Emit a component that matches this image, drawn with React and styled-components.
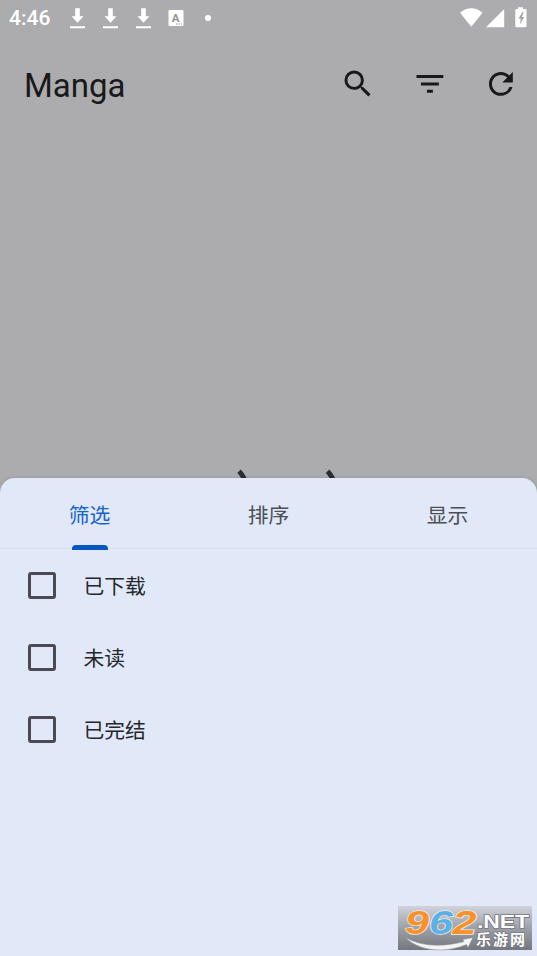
import styled, { createGlobalStyle } from "styled-components";

const GlobalStyle = createGlobalStyle`
  * {
    box-sizing: border-box;
  }
  body {
    margin: 0;
    font-family: Roboto, "Noto Sans CJK SC", sans-serif;
  }
  svg {
    display: block;
    flex: none;
  }
`;

const Screen = styled.div`
  position: relative;
  display: flex;
  flex-direction: column;
  width: 537px;
  height: 956px;
  overflow: hidden;
  background: #acacae;
`;

const StatusBar = styled.div`
  display: flex;
  align-items: center;
  justify-content: space-between;
  height: 36px;
  padding: 0 9px;
  color: #fff;
`;

const StatusGroup = styled.div`
  display: flex;
  align-items: center;
  gap: ${(props) => props.$gap};
`;

const Clock = styled.span`
  width: 44px;
  font-size: 21px;
  font-weight: 500;
  line-height: 36px;
  white-space: nowrap;
`;

const Dot = styled.span`
  width: 6px;
  height: 6px;
  margin-left: 5px;
  border-radius: 50%;
  background: #fff;
`;

const AppBar = styled.header`
  display: flex;
  align-items: center;
  justify-content: space-between;
  height: 95px;
  padding: 0 18px 0 24px;
  color: #19191b;
`;

const Title = styled.h1`
  margin: 5px 0 0;
  font-size: 33px;
  font-weight: 400;
  line-height: 44px;
`;

const Actions = styled.div`
  display: flex;
  gap: 35.8px;
`;

const Empty = styled.main`
  display: flex;
  flex: 1;
  align-items: flex-end;
  justify-content: center;
  padding-left: 36px;
`;

const Sheet = styled.section`
  height: 478px;
  border-radius: 15px 15px 0 0;
  background: #e1e9f8;
  box-shadow: 0 0 4px rgba(0, 0, 0, 0.12);
`;

const Tabs = styled.div`
  display: grid;
  grid-template-columns: repeat(3, 1fr);
  height: 71px;
  border-bottom: 1px solid #dcdfea;
`;

const Tab = styled.div`
  position: relative;
  padding-top: 22px;
  font-size: 20.8px;
  line-height: 32px;
  text-align: center;
  color: ${(props) => (props.$active ? "#1662cb" : "#4d4e56")};

  &::after {
    content: "";
    display: ${(props) => (props.$active ? "block" : "none")};
    position: absolute;
    left: 50%;
    bottom: -2px;
    width: 36px;
    height: 5px;
    margin-left: -18px;
    border-radius: 4px 4px 0 0;
    background: #0657c2;
  }
`;

const Row = styled.div`
  display: flex;
  align-items: center;
  gap: 28px;
  height: 71.67px;
  padding-left: 28px;
  font-size: 20.8px;
  line-height: 32px;
  color: #25262b;
`;

const Box = styled.span`
  width: 27.5px;
  height: 27px;
  border: 3px solid #4b4953;
  border-radius: 3px;
`;

const Label = styled.span`
  padding-top: 3px;
`;

const Options = styled.div`
  padding-top: 1px;
`;

const Badge = styled.div`
  position: absolute;
  right: 5px;
  bottom: 6px;
  width: 134px;
  height: 44px;
  background: linear-gradient(#d0d3dc, #a3a5ad 45%, #75777f);
`;

const BadgeSvg = styled.svg`
  overflow: visible;
  font-family: "Liberation Sans", "Noto Sans CJK SC", sans-serif;
  font-weight: 700;
`;

const Icon = ({ d }) => (
  <svg width="35.8" height="35.8" viewBox="0 0 24 24" fill="currentColor">
    <path d={d} />
  </svg>
);

const Download = () => (
  <svg width="17" height="22" viewBox="0 0 17 22" fill="#fff">
    <path d="M6.2 1.2h4.6v8h3.7l-6 6.5-6-6.5h3.7zM1 19.2h15v2H1z" />
  </svg>
);

const actions = [
  "M15.5 14h-.79l-.28-.27A6.47 6.47 0 0 0 16 9.5 6.5 6.5 0 1 0 9.5 16c1.61 0 3.09-.59 4.23-1.57l.27.28v.79l5 4.99L20.49 19l-4.99-5zm-6 0C7.01 14 5 11.99 5 9.5S7.01 5 9.5 5 14 7.01 14 9.5 11.99 14 9.5 14z",
  "M10 18h4v-2h-4v2zM3 6v2h18V6H3zm3 7h12v-2H6v2z",
  "M17.65 6.35A7.958 7.958 0 0 0 12 4c-4.42 0-7.99 3.58-7.99 8s3.57 8 7.99 8c3.73 0 6.84-2.55 7.73-6h-2.08A5.99 5.99 0 0 1 12 18c-3.31 0-6-2.69-6-6s2.69-6 6-6c1.66 0 3.14.69 4.22 1.78L13 11h7V4l-2.35 2.35z",
];

const tabs = ["筛选", "排序", "显示"];
const filters = ["已下载", "未读", "已完结"];

const digits = [
  { char: "9", x: 7, fill: "#f5922a" },
  { char: "6", x: 31, fill: "#5bb0e6" },
  { char: "2", x: 54.5, fill: "#f5922a" },
];

function Watermark() {
  return (
    <Badge>
      <BadgeSvg width="134" height="44" viewBox="0 0 134 44">
        <g
          fontSize="34"
          fontStyle="italic"
          stroke="#f1eeea"
          strokeWidth="1.4"
          paintOrder="stroke"
        >
          {digits.map(({ char, x, fill }) => (
            <text
              key={char}
              x={x}
              y="28"
              textLength="24"
              lengthAdjust="spacingAndGlyphs"
              fill={fill}
            >
              {char}
            </text>
          ))}
        </g>
        <path
          d="M7 31C23 41 46 41 66 35.5L64.5 33.5 75 31.5 70 41.5 68.5 38.5C46 48 20 45 7 31z"
          fill="#f3f3f4"
          stroke="#85878f"
          strokeWidth="0.5"
        />
        <g fill="#fff" stroke="#787a83" strokeWidth="1.6" paintOrder="stroke">
          <text
            x="79"
            y="22"
            fontSize="19"
            textLength="52"
            lengthAdjust="spacingAndGlyphs"
          >
            .NET
          </text>
          <text x="78" y="39" fontSize="15" textLength="49">
            乐游网
          </text>
        </g>
      </BadgeSvg>
    </Badge>
  );
}

function App() {
  return (
    <Screen>
      <GlobalStyle />
      <StatusBar>
        <StatusGroup $gap="16px">
          <Clock>4:46</Clock>
          <Download />
          <Download />
          <Download />
          <svg width="16" height="16" viewBox="0 0 16 16">
            <rect x="0.5" width="15" height="16" rx="1.2" fill="#fff" />
            <text
              x="3.7"
              y="12"
              fontSize="11.5"
              fontWeight="700"
              fill="#919193"
            >
              A
            </text>
            <path d="M8 14h1.4M10.5 14h1.4M13 14h1" stroke="#919193" />
          </svg>
          <Dot />
        </StatusGroup>
        <StatusGroup $gap="0">
          <svg width="68" height="22" viewBox="0 0 68 22" fill="#fff">
            <path d="M0 5.7Q11.3-3.1 22.6 5.7L11.3 19.8zM26 20.3L44.2 2V20.3z" />
            <path d="M58 .3h5v1.8h2.3q1.2 0 1.2 1.2v15.8q0 1.2-1.2 1.2h-8.8q-1.2 0-1.2-1.2V3.3q0-1.2 1.2-1.2h1.5z" />
            <path
              d="M62.3 5.3L58.5 11.6h2.3l-.9 6 4.2-7.500h-2.4l2.1-4.8z"
              fill="#a2a2a4"
            />
          </svg>
        </StatusGroup>
      </StatusBar>

      <AppBar>
        <Title>Manga</Title>
        <Actions>
          {actions.map((d) => (
            <Icon key={d} d={d} />
          ))}
        </Actions>
      </AppBar>

      <Empty>
        {/* top of the empty-library face, the rest is under the sheet */}
        <svg width="100" height="9" viewBox="0 0 100 9">
          <path
            d="M2 2.2Q5.5 5.5 8 11.5M90.5 2.2Q94 5.5 96.5 11.5"
            fill="none"
            stroke="#2d2c31"
            strokeWidth="5"
          />
        </svg>
      </Empty>

      <Sheet>
        <Tabs>
          {tabs.map((label, i) => (
            <Tab key={label} $active={i === 0}>
              {label}
            </Tab>
          ))}
        </Tabs>
        <Options>
          {filters.map((label) => (
            <Row key={label}>
              <Box />
              <Label>{label}</Label>
            </Row>
          ))}
        </Options>
      </Sheet>
      <Watermark />
    </Screen>
  );
}

export default App;
